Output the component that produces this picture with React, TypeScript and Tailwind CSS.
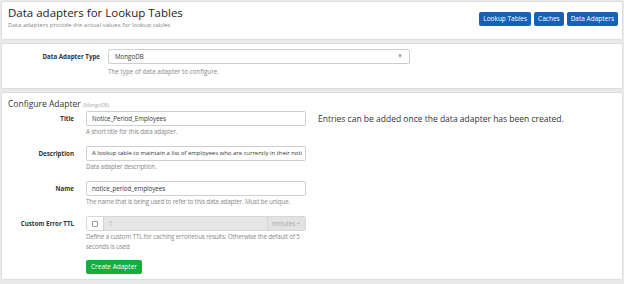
import { ChevronDown } from 'lucide-react';

const font = { fontFamily: '"Open Sans", "Liberation Sans", sans-serif' };

function Row({
  label,
  help,
  children,
}: {
  label: string;
  help: React.ReactNode;
  children: React.ReactNode;
}) {
  return (
    <div className="flex items-start gap-[12px] mb-[9px]">
      <div className="w-[66px] shrink-0 text-right text-[6.2px] font-bold leading-[15px] text-[#333]">
        {label}
      </div>
      <div className="w-[220px]">
        {children}
        <div className="mt-[1px] text-[6.25px] tracking-[-0.15px] leading-[10px] text-[#888] whitespace-nowrap">{help}</div>
      </div>
    </div>
  );
}

function TextInput({ value, size = 'text-[6.2px]' }: { value: string; size?: string }) {
  return (
    <div className={`h-[15px] border border-[#cfcfcf] rounded-[2px] bg-white px-[5px] leading-[13px] text-[#333] whitespace-nowrap overflow-hidden ${size}`}>
      {value}
    </div>
  );
}

export default function App() {
  return (
    <div
      className="h-[284px] w-[624px] bg-[#e9e9e9] px-[1px] pt-[1px] pb-[4px] flex flex-col gap-[3px] overflow-hidden"
      style={font}
    >
      {/* Header */}
      <div className="h-[39px] shrink-0 bg-white border border-[#dedede] rounded-[2px] pl-[6px] pr-[4px] flex justify-between">
        <div className="pt-[3px]">
          <h1 className="text-[11.5px] leading-[16px] text-[#222]">Data adapters for Lookup Tables</h1>
          <p className="text-[6.1px] leading-[8px] text-[#888]">Data adapters provide the actual values for lookup tables</p>
        </div>
        <div className="flex gap-[3px] pt-[10px]">
          {['Lookup Tables', 'Caches', 'Data Adapters'].map((b) => (
            <button
              key={b}
              className="h-[14px] px-[4px] rounded-[2px] bg-[#1660b8] text-white text-[6.5px] leading-[14px]"
            >
              {b}
            </button>
          ))}
        </div>
      </div>

      {/* Adapter type */}
      <div className="h-[46px] shrink-0 bg-white border border-[#dedede] rounded-[2px] pt-[5px]">
        <div className="flex items-start gap-[8px]">
          <div className="w-[98px] shrink-0 text-right text-[6.2px] font-bold leading-[15px] text-[#333]">
            Data Adapter Type
          </div>
          <div className="w-[302px]">
            <div className="h-[15px] border border-[#cfcfcf] rounded-[2px] px-[6px] flex items-center justify-between text-[6.2px] text-[#333]">
              <span>MongoDB</span>
              <span className="text-[#999] text-[6px]">▼</span>
            </div>
            <div className="mt-[3px] text-[6.3px] leading-[10px] text-[#888]">The type of data adapter to configure.</div>
          </div>
        </div>
      </div>

      {/* Configure */}
      <div className="flex-1 bg-white border border-[#dedede] rounded-[2px] pl-[6px] pt-[5px]">
        <h2 className="text-[8.5px] leading-[12px] text-[#333]">
          Configure Adapter <span className="text-[5px] text-[#aaa]">(MongoDB)</span>
        </h2>
        <div className="flex">
          <div className="w-[310px] shrink-0">
            <Row label="Title" help="A short title for this data adapter.">
              <TextInput value="Notice_Period_Employees" />
            </Row>
            <Row label="Description" help="Data adapter description.">
              <TextInput
                size="text-[5.95px]"
                value="A lookup table to maintain a list of employees who are currently in their noti"
              />
            </Row>
            <Row label="Name" help="The name that is being used to refer to this data adapter. Must be unique.">
              <TextInput value="notice_period_employees" />
            </Row>
            <Row
              label="Custom Error TTL"
              help={
                <>
                  Define a custom TTL for caching erroneous results. Otherwise the default of 5
                  <br />
                  seconds is used
                </>
              }
            >
              <div className="h-[15px] flex border border-[#d6d6d6] rounded-[2px] text-[6.2px] text-[#aaa]">
                <div className="w-[17px] shrink-0 bg-white flex items-center justify-center border-r border-[#d6d6d6]">
                  <div className="w-[6px] h-[6px] border border-[#999] rounded-[1px]" />
                </div>
                <div className="flex-1 bg-[#e6e6e6] px-[5px] leading-[13px]">1</div>
                <div className="w-[38px] shrink-0 bg-[#e2e2e2] border-l border-[#d6d6d6] flex items-center justify-center gap-[1px] text-[#aaa]">
                  minutes
                  <ChevronDown className="w-[5px] h-[5px]" strokeWidth={4} />
                </div>
              </div>
            </Row>
            <div className="flex pl-[78px] -mt-[1px]">
              <button className="h-[14px] px-[5px] rounded-[2px] bg-[#16ad3e] text-white text-[6.5px] leading-[14px]">
                Create Adapter
              </button>
            </div>
          </div>
          <div className="pt-[2px] text-[8.5px] leading-[12px] text-[#333]">
            Entries can be added once the data adapter has been created.
          </div>
        </div>
      </div>
    </div>
  );
}
